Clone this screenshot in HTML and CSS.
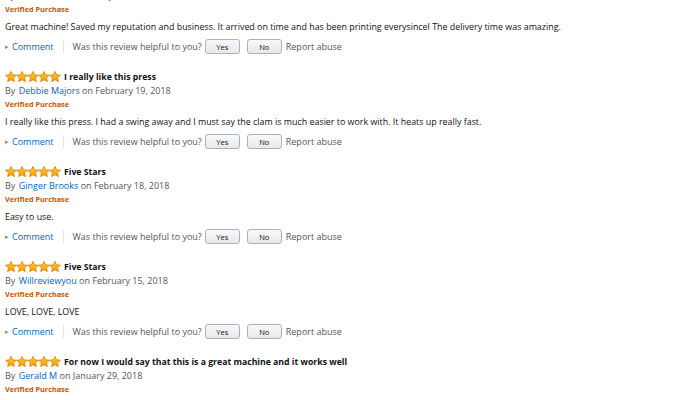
FILE: index.html
```html
<!DOCTYPE html>
<html>
<head>
<meta charset="utf-8">
<link rel="stylesheet" href="styles.css">
</head>
<body>
<svg class="defs" width="0" height="0" aria-hidden="true">
  <defs>
    <linearGradient id="sg" x1="0" y1="0" x2="0" y2="1">
      <stop offset="0" stop-color="#ffcf33"/>
      <stop offset="1" stop-color="#f39c00"/>
    </linearGradient>
    <g id="star"><polygon points="6,0.4 7.59,3.82 11.4,4.25 8.57,6.83 9.35,10.6 6,8.7 2.65,10.6 3.43,6.83 0.6,4.25 4.41,3.82" fill="url(#sg)" stroke="#d5800c" stroke-width="0.8" stroke-linejoin="round"/></g>
  </defs>
</svg>
<div class="list">
  <div class="review">
    <div class="head"><svg class="stars" width="56" height="12" viewBox="0 0 56 12"><use href="#star"/><use href="#star" x="11"/><use href="#star" x="22"/><use href="#star" x="33"/><use href="#star" x="44"/></svg><span class="title">Great machine</span></div>
    <div class="by">By <a class="author">Customer</a> on February 20, 2018</div>
    <div class="verified">Verified Purchase</div>
    <div class="text">Great machine! Saved my reputation and business. It arrived on time and has been printing everysincel The delivery time was amazing.</div>
    <div class="actions"><span class="tri">&#9656;</span><a class="comment">Comment</a><span class="sep"></span><span class="help">Was this review helpful to you?</span><span class="btn">Yes</span><span class="btn">No</span><span class="report">Report abuse</span></div>
  </div>
  <div class="review">
    <div class="head"><svg class="stars" width="56" height="12" viewBox="0 0 56 12"><use href="#star"/><use href="#star" x="11"/><use href="#star" x="22"/><use href="#star" x="33"/><use href="#star" x="44"/></svg><span class="title">I really like this press</span></div>
    <div class="by">By <a class="author">Debbie Majors</a> on February 19, 2018</div>
    <div class="verified">Verified Purchase</div>
    <div class="text">I really like this press. I had a swing away and I must say the clam is much easier to work with. It heats up really fast.</div>
    <div class="actions"><span class="tri">&#9656;</span><a class="comment">Comment</a><span class="sep"></span><span class="help">Was this review helpful to you?</span><span class="btn">Yes</span><span class="btn">No</span><span class="report">Report abuse</span></div>
  </div>
  <div class="review">
    <div class="head"><svg class="stars" width="56" height="12" viewBox="0 0 56 12"><use href="#star"/><use href="#star" x="11"/><use href="#star" x="22"/><use href="#star" x="33"/><use href="#star" x="44"/></svg><span class="title">Five Stars</span></div>
    <div class="by">By <a class="author">Ginger Brooks</a> on February 18, 2018</div>
    <div class="verified">Verified Purchase</div>
    <div class="text">Easy to use.</div>
    <div class="actions"><span class="tri">&#9656;</span><a class="comment">Comment</a><span class="sep"></span><span class="help">Was this review helpful to you?</span><span class="btn">Yes</span><span class="btn">No</span><span class="report">Report abuse</span></div>
  </div>
  <div class="review">
    <div class="head"><svg class="stars" width="56" height="12" viewBox="0 0 56 12"><use href="#star"/><use href="#star" x="11"/><use href="#star" x="22"/><use href="#star" x="33"/><use href="#star" x="44"/></svg><span class="title">Five Stars</span></div>
    <div class="by">By <a class="author">Willreviewyou</a> on February 15, 2018</div>
    <div class="verified">Verified Purchase</div>
    <div class="text">LOVE, LOVE, LOVE</div>
    <div class="actions"><span class="tri">&#9656;</span><a class="comment">Comment</a><span class="sep"></span><span class="help">Was this review helpful to you?</span><span class="btn">Yes</span><span class="btn">No</span><span class="report">Report abuse</span></div>
  </div>
  <div class="review">
    <div class="head"><svg class="stars" width="56" height="12" viewBox="0 0 56 12"><use href="#star"/><use href="#star" x="11"/><use href="#star" x="22"/><use href="#star" x="33"/><use href="#star" x="44"/></svg><span class="title">For now I would say that this is a great machine and it works well</span></div>
    <div class="by">By <a class="author">Gerald M</a> on January 29, 2018</div>
    <div class="verified">Verified Purchase</div>
  </div>
</div>
</body>
</html>
```
FILE: styles.css
```css
html, body { margin: 0; padding: 0; background: #fff; }
body { font-family: "Open Sans", "Noto Sans", sans-serif; font-size: 9px; color: #111; overflow: hidden; height: 400px; }
.defs { position: absolute; }
.list { margin-top: -26px; padding-left: 5px; }
.review { margin-bottom: 14px; }
.head { display: flex; align-items: center; height: 15px; }
.stars { display: block; flex: none; }
.title { font-weight: 700; margin-left: 3px; font-size: 8.7px; }
.by { line-height: 14px; color: #555; }
.author { color: #0066c0; margin-left: 1px; }
.verified { line-height: 13px; color: #c45500; font-weight: 700; font-size: 7.3px; }
.text { margin-top: 4px; line-height: 13px; font-size: 8.9px; }
.actions { margin-top: 5px; display: flex; align-items: center; height: 17px; color: #555; }
.tri { color: #888; font-size: 7px; width: 7px; }
.comment { color: #0066c0; font-size: 9px; }
.sep { width: 1px; height: 13px; background: #e3e3e3; margin: 0 9px 0 9px; }
.help { margin-right: 3px; }
.btn { display: inline-flex; align-items: center; justify-content: center; width: 33px; height: 13px; border: 1px solid #adb1b8; border-radius: 3px; background: linear-gradient(#f7f8fa, #e7e9ec); font-size: 7.5px; color: #111; margin-right: 7px; }
.btn + .btn { margin-right: 4px; }
.report { color: #555; }
```
